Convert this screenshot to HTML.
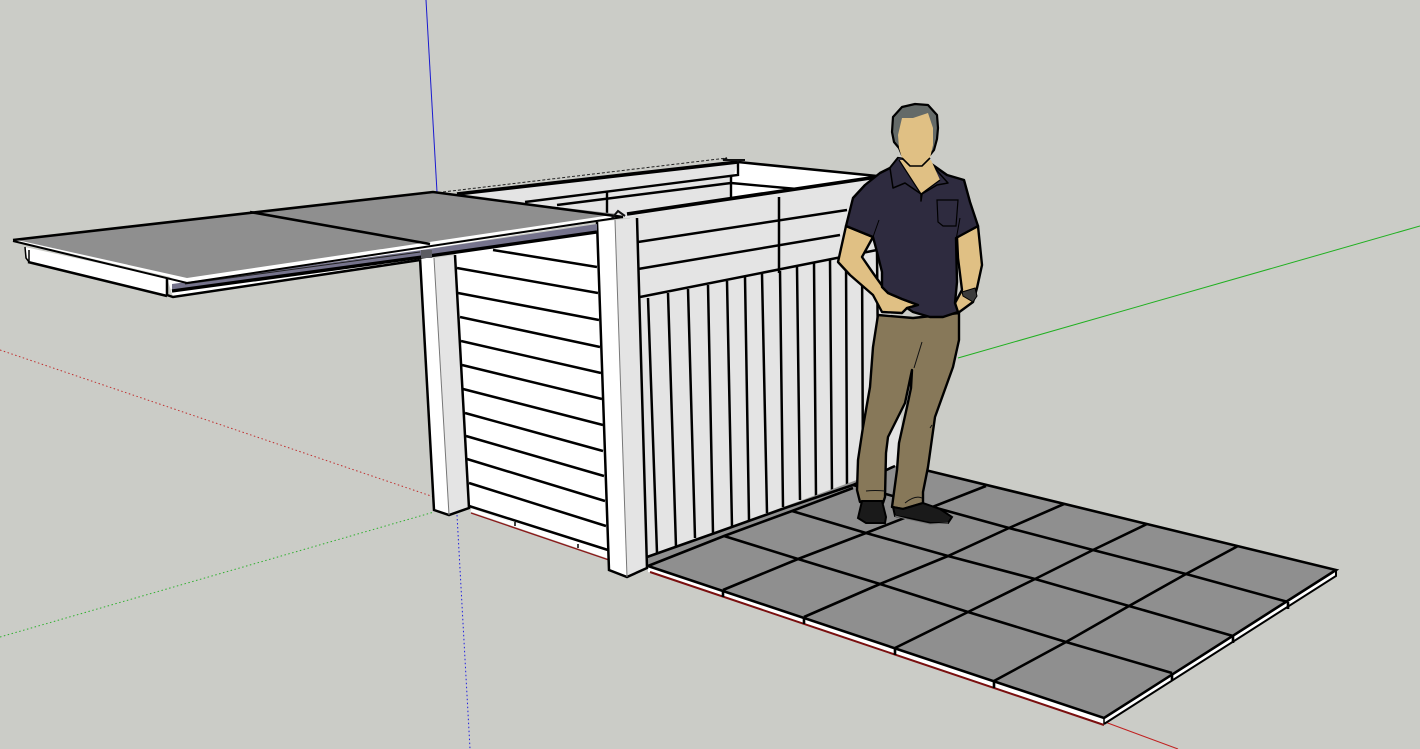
<!DOCTYPE html>
<html>
<head>
<meta charset="utf-8">
<title>3D model viewport</title>
<style>
html,body{margin:0;padding:0;background:#cbccc7;width:1420px;height:749px;overflow:hidden}
svg{display:block}
</style>
</head>
<body>
<svg width="1420" height="749" viewBox="0 0 1420 749" xmlns="http://www.w3.org/2000/svg">
<rect width="1420" height="749" fill="#cbccc7"/>
<!-- axes -->
<g fill="none" stroke-width="1">
<path d="M426 0L437 192" stroke="#1a1ad0"/>
<path d="M457 515L470 749" stroke="#2020e0" stroke-dasharray="1.5 2.5"/>
<path d="M0 350L434 497" stroke="#c03030" stroke-dasharray="1.5 2.5"/>
<path d="M0 637L434 512" stroke="#30b030" stroke-dasharray="1.5 2.5"/>
<path d="M958 358L1420 226" stroke="#20b020"/>
<path d="M1105 722L1178 749" stroke="#c02020"/>
</g>

<!-- back box -->
<path d="M457 193L738 162L877 175L870 185L627 218Z" fill="#e4e4e4"/>
<path d="M738 163L877 175L797 189L731 183Z" fill="#fff"/>
<path d="M731 183L797 189L731 198Z" fill="#fff"/>
<g fill="none" stroke="#000" stroke-width="2.4">
<path d="M738 163L738 175L525 202"/>
<path d="M731 183L557 205"/>
<path d="M607 192V213M731 176V198M731 183L797 189"/>
<path d="M738 162L877 176" stroke-width="2.6"/>
</g>
<path d="M457 194L738 162" fill="none" stroke="#000" stroke-width="3.6"/>
<path d="M443 192L727 158" fill="none" stroke="#222" stroke-width="1" stroke-dasharray="3 2"/>
<path d="M727 158L723 160L745 160" fill="none" stroke="#111" stroke-width="2"/>

<!-- side panel -->
<path d="M455 250L598 225L609 556L469 507Z" fill="#fff"/>
<g fill="none" stroke="#000" stroke-width="2.5">
<path d="M493 250L597 267M457 268L598 293M458 293L599 320M460 317L600 347M461 341L601 373M462 365L602 399M463 389L603 425M465 413L603 451M466 436L604 476M467 459L605 501M469 483L606 526M469 506L608 550"/>
</g>

<!-- base strip red/white under side panel -->
<path d="M471 510L609 557" stroke="#fff" stroke-width="3.5" fill="none"/>
<path d="M471 513L609 560" stroke="#8a1a1a" stroke-width="1.4" fill="none"/>
<path d="M515 522V526M578 544V548" stroke="#000" stroke-width="1.5" fill="none"/>

<!-- left post -->
<path d="M420 258L434 258L449 515L434 510Z" fill="#fff"/>
<path d="M434 258L455 255L469 508L449 515Z" fill="#e4e4e4"/>
<path d="M420 258L434 510L449 515L469 508L455 255" fill="none" stroke="#000" stroke-width="2.5"/>
<path d="M434 258L449 515" fill="none" stroke="#777" stroke-width="1"/>

<!-- front wall -->
<path d="M630 218L878 178L905 462L647 557Z" fill="#e4e4e4"/>
<g fill="none" stroke="#000" stroke-width="2.5">
<path d="M638 242L847 210M638 269L840 235M640 297L877 250"/>
<path d="M779 197V273"/>
<path d="M648 298L657 553M668 293L676 547M688 289L695 538M708 285L713 533M727 281L732 527M745 277L749 520M762 274L767 513M780 271L783 507M797 267L800 500M814 263L816 497M830 260L832 492M846 257L847 486M862 254L863 481M877 251L879 476"/>
</g>
<path d="M627 214L877 177" fill="none" stroke="#000" stroke-width="3.6"/>

<!-- tiles -->
<path d="M648 557L895 466L925 470L1336 570L1104 718L648 566Z" fill="#8f8f8f"/>
<path d="M648 566L1104 718L1104 724L648 572Z" fill="#fff"/>
<path d="M1104 718L1336 570L1336 576L1104 724Z" fill="#fff"/>
<path d="M650 572L1104 725" fill="none" stroke="#7a0f0f" stroke-width="2"/>
<g fill="none" stroke="#000" stroke-width="2.6">
<path d="M647 557L715 533L785 508L853 485L895 466"/>
<path d="M648 566L724 536L792 511L853 488"/>
<path d="M648 566L1104 718L1336 570L925 470"/>
<path d="M724 536L798 559L880 584L968 612L1066 642L1172 673"/>
<path d="M792 511L866 533L948 556L1035 579L1129 606L1233 636"/>
<path d="M853 485L1009 528L1093 550L1186 574L1288 602"/>
<path d="M723 590L798 559L866 533L986 486"/>
<path d="M804 617L880 584L948 556L1009 528L1064 504"/>
<path d="M895 648L968 612L1035 579L1093 550L1147 524"/>
<path d="M994 681L1066 642L1129 606L1186 574L1238 546"/>
<path d="M723 590V597M804 617V624M895 648V655M994 681V688M1172 673V680M1233 636V643M1288 602V609"/>
<path d="M1104 724L1336 576V570" stroke-width="2"/>
<path d="M1104 718V724" stroke-width="1.5"/>
</g>

<!-- right post -->
<path d="M597 222L615 220L627 577L609 570Z" fill="#fff"/>
<path d="M615 220L637 218L647 568L627 577Z" fill="#e4e4e4"/>
<path d="M597 222L609 570L627 577L647 568L637 218" fill="none" stroke="#000" stroke-width="2.5"/>
<path d="M615 220L627 577" fill="none" stroke="#777" stroke-width="1"/>

<!-- table underside -->
<path d="M25 247L167 278L167 296L28 262Z" fill="#fff"/>
<path d="M28 262L167 296" stroke="#000" stroke-width="2.5" fill="none"/>
<path d="M25 247L26 258L29 262M29 250V262" stroke="#000" stroke-width="1.5" fill="none"/>
<path d="M167 278L173 297L420 260L422 250L597 222L428 245Z" fill="#fff"/>
<path d="M167 278L167 295L173 297L420 260" stroke="#000" stroke-width="2.5" fill="none"/>
<path d="M172 284L422 250L597 224L597 232L422 258L172 291Z" fill="#75738c"/>
<path d="M172 291L422 257L597 232" fill="none" stroke="#000" stroke-width="3.4"/>
<path d="M185 284L420 252" fill="none" stroke="#222" stroke-width="1"/>
<path d="M421 250H432V258H421Z" fill="#5c5c62"/>

<!-- table top -->
<path d="M13 240L433 192L623 216L187 281Z" fill="#fff"/>
<path d="M17 240L433 193L618 214L187 278Z" fill="#8f8f8f"/>
<g fill="none" stroke="#000" stroke-width="2.6">
<path d="M13 240L433 192L623 217"/>
<path d="M250 212L430 244"/>
</g>
<path d="M13 241L187 283L623 217" fill="none" stroke="#000" stroke-width="2"/>
<path d="M612 218L618 211L625 216" fill="none" stroke="#111" stroke-width="2"/>

<!-- person -->
<!-- pants -->
<path d="M878 315L873 347L870 387L863 427L858 460L857 490L860 502L883 503L885 497L886 453L888 437L905 403L912 370L911 388L907 407L899 443L897 470L892 507L903 509L923 503L923 492L928 467L935 417L953 367L959 340L959 313L913 318Z" fill="#877859" stroke="#000" stroke-width="2.4" stroke-linejoin="round"/>
<path d="M922 342L914 368M932 425L930 428M885 491Q875 490 866 491M905 503Q915 495 922 498" fill="none" stroke="#111" stroke-width="1"/>
<!-- shoes -->
<path d="M862 501L882 501L886 517L885 523L866 523L858 518Z" fill="#1a1a1a" stroke="#000" stroke-width="2"/>
<path d="M893 507L903 509L923 503L940 509L952 517L948 523L930 523L907 518L895 516Z" fill="#1a1a1a" stroke="#000" stroke-width="2"/>
<path d="M895 516L907 519L930 524L948 523" fill="none" stroke="#777" stroke-width="1"/>
<!-- arms -->
<path d="M846 226L838 262L850 275L873 295L882 312L902 313L907 308L918 305L902 299L888 293L883 287L873 273L862 257L873 237Z" fill="#e0c084" stroke="#000" stroke-width="2.4" stroke-linejoin="round"/>
<path d="M957 237L978 226L982 265L977 288L973 302L958 313L942 308L947 305L955 303L962 290L958 258Z" fill="#e0c084" stroke="#000" stroke-width="2.4" stroke-linejoin="round"/>
<!-- shirt -->
<path d="M898 158L890 168L880 173L865 185L853 198L846 226L873 237L877 252L882 272L882 287L888 293L902 299L918 305L907 308L913 312L930 317L943 317L958 312L955 303L957 282L956 238L978 226L970 202L964 180L947 175L930 163Z" fill="#2e2b3f" stroke="#000" stroke-width="2.4" stroke-linejoin="round"/>
<!-- collar and neck -->
<path d="M898 158L890 168L893 188L905 183L921 194L921 201L922 194L937 185L948 183L930 163" fill="#2e2b3f" stroke="#000" stroke-width="1.5" stroke-linejoin="round"/>
<path d="M899 160L921 194L940 180L931 160Z" fill="#e0c084"/>
<path d="M899 160L921 194L940 180" fill="none" stroke="#000" stroke-width="1.2"/>
<path d="M937 200H958L956 226L943 226L938 222Z" fill="#2e2b3f" stroke="#000" stroke-width="1.2"/>
<path d="M879 220L873 237M960 218L956 240" fill="none" stroke="#000" stroke-width="1"/>
<!-- watch -->
<path d="M962 292L975 288L977 296L973 302L963 296Z" fill="#3c3c3c" stroke="#000" stroke-width="1"/>
<!-- head -->
<path d="M892 132L893 117L902 107L915 104L928 105L937 115L938 128L937 139L934 150L930 155L902 155L899 148L894 142Z" fill="#646a68" stroke="#000" stroke-width="2.2" stroke-linejoin="round"/>
<path d="M902 118L913 118L928 113L933 128L933 145L930 158L922 166L910 166L902 158L899 148L898 135Z" fill="#e0c084"/>
<path d="M902 158L910 166L922 166L930 158" fill="none" stroke="#000" stroke-width="1.6"/>
</svg>
</body>
</html>
